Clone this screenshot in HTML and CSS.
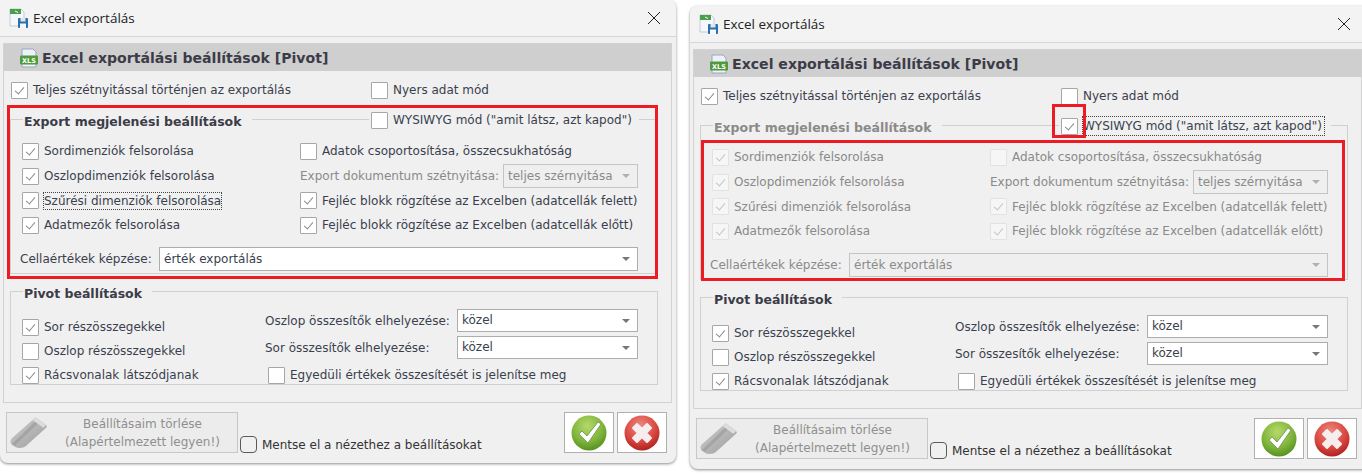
FILE: index.html
```html
<!DOCTYPE html>
<html>
  <head>
    <meta charset="utf-8" />
    <title>Excel exportálás</title>
    <link rel="stylesheet" href="styles.css">
  </head>
  <body>
    <svg class="icon-defs" width="0" height="0">
      <defs>
        <radialGradient id="green-ball" cx="45%" cy="30%" r="75%">
          <stop offset="0" stop-color="#b5da6a" />
          <stop offset="0.6" stop-color="#7fb43a" />
          <stop offset="1" stop-color="#4e8a1c" />
        </radialGradient>
        <radialGradient id="red-ball" cx="45%" cy="30%" r="75%">
          <stop offset="0" stop-color="#ee8a80" />
          <stop offset="0.6" stop-color="#d9473f" />
          <stop offset="1" stop-color="#a81c1c" />
        </radialGradient>
        <linearGradient id="eraser-body" x1="0" y1="0" x2="1" y2="1">
          <stop offset="0" stop-color="#cfcfcf" />
          <stop offset="1" stop-color="#9c9c9c" />
        </linearGradient>
        <symbol id="icon-title" viewBox="0 0 20 20">
          <path d="M1 1h11l3 3v14H1z" fill="#f4f7fb" stroke="#c4ccd6" />
          <rect x="1" y="1" width="11" height="5" fill="#4aa04a" />
          <path d="M6 3l3 1.500" stroke="#fff" fill="none" />
          <rect x="9" y="10" width="10" height="10" rx="1" fill="#2f6fa8" />
          <rect x="11.500" y="10" width="5" height="3.500" fill="#dbe7f2" />
          <rect x="11" y="15.500" width="6" height="4.500" fill="#f4f7fb" />
        </symbol>
        <symbol id="icon-xls" viewBox="0 0 20 20">
          <path d="M3 1h11l3 3v15H3z" fill="#eef1f8" stroke="#9aa6c4" />
          <rect x="1" y="7.500" width="18" height="9" rx="1" fill="#4f9a3c" />
          <text x="10" y="14.800" class="xls-text">XLS</text>
        </symbol>
        <symbol id="icon-eraser" viewBox="0 0 40 34">
          <path d="M27 1l11 8a2 2 0 0 1 0 3L17 31c-3 2.500-8 3-11 1.500L2 30c-2-2-2-5 0-7z" fill="url(#eraser-body)" />
          <path d="M2 29L27 5l3 2L5 31z" fill="#8f8f8f" opacity="0.45" />
          <path d="M27 1l11 8-3 3-11-8z" fill="#dcdcdc" />
        </symbol>
        <symbol id="icon-ok" viewBox="0 0 36 36">
          <circle cx="18" cy="18" r="17.500" fill="url(#green-ball)" />
          <path d="M8 19l3-3 5 5L27 7l3 2-13 19z" fill="#fff" stroke="#6d8f58" stroke-width="0.800" />
        </symbol>
        <symbol id="icon-cancel" viewBox="0 0 36 36">
          <circle cx="18" cy="18" r="17.500" fill="url(#red-ball)" />
          <path d="M13 9l5 5 5-5 4 4-5 5 5 5-4 4-5-5-5 5-4-4 5-5-5-5z" fill="#f6eeee" stroke-linejoin="round" stroke="#f6eeee" stroke-width="2" />
        </symbol>
      </defs>
    </svg>

    <!-- bal ablak -->
    <div class="dialog dialog-left">
      <div class="titlebar">
        <svg class="title-icon"><use href="#icon-title" /></svg>
        <span class="title-text">Excel exportálás</span>
        <svg class="close-icon" viewBox="0 0 12 12"><path d="M0 0l12 12M12 0L0 12" /></svg>
      </div>
      <div class="panel">
        <div class="panel-head">
          <svg class="xls-icon"><use href="#icon-xls" /></svg>
          <span>Excel exportálási beállítások [Pivot]</span>
        </div>
        <div class="top-row">
          <label class="opt"><i class="check on"></i>Teljes szétnyitással történjen az exportálás</label>
          <label class="opt"><i class="check"></i>Nyers adat mód</label>
        </div>
        <div class="group group-export">
          <div class="group-head">
            <span class="legend">Export megjelenési beállítások</span>
            <label class="opt legend-opt"><i class="check"></i>WYSIWYG mód ("amit látsz, azt kapod")</label>
          </div>
          <div class="export-grid">
            <label class="opt"><i class="check on"></i>Sordimenziók felsorolása</label>
            <label class="opt"><i class="check"></i>Adatok csoportosítása, összecsukhatóság</label>
            <label class="opt"><i class="check on"></i>Oszlopdimenziók felsorolása</label>
            <div class="field field-split muted"><span>Export dokumentum szétnyitása:</span><div class="select off">teljes szérnyitása</div></div>
            <label class="opt"><i class="check on"></i><span class="focus">Szűrési dimenziók felsorolása</span></label>
            <label class="opt"><i class="check on"></i>Fejléc blokk rögzítése az Excelben (adatcellák felett)</label>
            <label class="opt"><i class="check on"></i>Adatmezők felsorolása</label>
            <label class="opt"><i class="check on"></i>Fejléc blokk rögzítése az Excelben (adatcellák előtt)</label>
          </div>
          <div class="field field-cell"><span>Cellaértékek képzése:</span><div class="select">érték exportálás</div></div>
        </div>
        <div class="group group-pivot">
          <div class="group-head"><span class="legend">Pivot beállítások</span></div>
          <div class="pivot-grid">
            <div class="pivot-left">
              <label class="opt"><i class="check on"></i>Sor részösszegekkel</label>
              <label class="opt"><i class="check"></i>Oszlop részösszegekkel</label>
              <label class="opt"><i class="check on"></i>Rácsvonalak látszódjanak</label>
            </div>
            <div class="pivot-right">
              <div class="field field-pivot"><span>Oszlop összesítők elhelyezése:</span><div class="select">közel</div></div>
              <div class="field field-pivot"><span>Sor összesítők elhelyezése:</span><div class="select">közel</div></div>
              <label class="opt opt-single"><i class="check"></i>Egyedüli értékek összesítését is jelenítse meg</label>
            </div>
          </div>
        </div>
      </div>
      <div class="footer">
        <button class="btn-reset"><svg class="eraser"><use href="#icon-eraser" /></svg><span>Beállításaim törlése<br />(Alapértelmezett legyen!)</span></button>
        <label class="opt opt-save"><i class="check round"></i>Mentse el a nézethez a beállításokat</label>
        <button class="btn-icon btn-ok"><svg><use href="#icon-ok" /></svg></button>
        <button class="btn-icon"><svg><use href="#icon-cancel" /></svg></button>
      </div>
      <div class="red-frame frame-left"></div>
    </div>

    <!-- jobb ablak, letiltott beállításokkal -->
    <div class="dialog dialog-right">
      <div class="titlebar">
        <svg class="title-icon"><use href="#icon-title" /></svg>
        <span class="title-text">Excel exportálás</span>
        <svg class="close-icon" viewBox="0 0 12 12"><path d="M0 0l12 12M12 0L0 12" /></svg>
      </div>
      <div class="panel">
        <div class="panel-head">
          <svg class="xls-icon"><use href="#icon-xls" /></svg>
          <span>Excel exportálási beállítások [Pivot]</span>
        </div>
        <div class="top-row">
          <label class="opt"><i class="check on"></i>Teljes szétnyitással történjen az exportálás</label>
          <label class="opt"><i class="check"></i>Nyers adat mód</label>
        </div>
        <div class="group group-export is-disabled">
          <div class="group-head">
            <span class="legend">Export megjelenési beállítások</span>
            <label class="opt legend-opt"><i class="check on"></i><span class="focus focus-tight">WYSIWYG mód ("amit látsz, azt kapod")</span></label>
          </div>
          <div class="export-grid">
            <label class="opt"><i class="check on"></i>Sordimenziók felsorolása</label>
            <label class="opt"><i class="check"></i>Adatok csoportosítása, összecsukhatóság</label>
            <label class="opt"><i class="check on"></i>Oszlopdimenziók felsorolása</label>
            <div class="field field-split muted"><span>Export dokumentum szétnyitása:</span><div class="select off">teljes szérnyitása</div></div>
            <label class="opt"><i class="check on"></i>Szűrési dimenziók felsorolása</label>
            <label class="opt"><i class="check on"></i>Fejléc blokk rögzítése az Excelben (adatcellák felett)</label>
            <label class="opt"><i class="check on"></i>Adatmezők felsorolása</label>
            <label class="opt"><i class="check on"></i>Fejléc blokk rögzítése az Excelben (adatcellák előtt)</label>
          </div>
          <div class="field field-cell"><span>Cellaértékek képzése:</span><div class="select off">érték exportálás</div></div>
        </div>
        <div class="group group-pivot">
          <div class="group-head"><span class="legend">Pivot beállítások</span></div>
          <div class="pivot-grid">
            <div class="pivot-left">
              <label class="opt"><i class="check on"></i>Sor részösszegekkel</label>
              <label class="opt"><i class="check"></i>Oszlop részösszegekkel</label>
              <label class="opt"><i class="check on"></i>Rácsvonalak látszódjanak</label>
            </div>
            <div class="pivot-right">
              <div class="field field-pivot"><span>Oszlop összesítők elhelyezése:</span><div class="select">közel</div></div>
              <div class="field field-pivot"><span>Sor összesítők elhelyezése:</span><div class="select">közel</div></div>
              <label class="opt opt-single"><i class="check"></i>Egyedüli értékek összesítését is jelenítse meg</label>
            </div>
          </div>
        </div>
      </div>
      <div class="footer">
        <button class="btn-reset"><svg class="eraser"><use href="#icon-eraser" /></svg><span>Beállításaim törlése<br />(Alapértelmezett legyen!)</span></button>
        <label class="opt opt-save"><i class="check round"></i>Mentse el a nézethez a beállításokat</label>
        <button class="btn-icon btn-ok"><svg><use href="#icon-ok" /></svg></button>
        <button class="btn-icon"><svg><use href="#icon-cancel" /></svg></button>
      </div>
      <div class="red-frame frame-right"></div>
      <div class="red-frame frame-check"></div>
    </div>
  </body>
</html>
```

FILE: styles.css
```css
* {
  margin: 0;
  padding: 0;
  box-sizing: border-box;
}

html,
body {
  height: 474px;
  overflow: hidden;
  background-color: #fff;
}

body {
  position: relative;
  font-family: "DejaVu Sans", "Liberation Sans", sans-serif;
  font-size: 12px;
  color: #3a3f4d;
}

.icon-defs {
  position: absolute;
}

.xls-text {
  font-family: "DejaVu Sans", sans-serif;
  font-size: 6.500px;
  font-weight: bold;
  fill: #fff;
  text-anchor: middle;
}

/* ablakok */
.dialog {
  position: absolute;
  width: 676px;
  height: 463px;
  background-color: #f0f0f0;
  border-radius: 0 8px 8px 8px;
  box-shadow: 0 1px 3px rgba(0, 0, 0, 0.45);
  overflow: hidden;
}

.dialog-left {
  left: 0;
  top: 0;
}

.dialog-right {
  left: 690px;
  top: 6px;
  border-radius: 8px 0 0 8px;
}

.titlebar {
  display: flex;
  align-items: center;
  height: 37px;
  padding: 0 16px 0 9px;
  background-color: #f3f3f3;
  border-bottom: 1px solid #d6d6d6;
}

.title-icon {
  width: 20px;
  height: 20px;
  margin-right: 4px;
}

.title-text {
  flex: 1;
  font-family: "Open Sans", sans-serif;
  font-size: 13.500px;
  color: #222;
}

.close-icon {
  width: 12px;
  height: 12px;
  fill: none;
  stroke: #222;
  stroke-width: 1;
}

/* fő panel */
.panel {
  height: 360px;
  margin: 6px 4px 0 3px;
  border: 1px solid #d2d2d2;
}

.panel-head {
  display: flex;
  align-items: center;
  height: 27px;
  padding-left: 15px;
  background-color: #cfcfcf;
  font-size: 14.100px;
  font-weight: bold;
  color: #3c3c48;
}

.xls-icon {
  width: 20px;
  height: 20px;
  margin-right: 3px;
}

.top-row {
  display: grid;
  grid-template-columns: 360px 1fr;
  align-items: center;
  height: 24px;
  margin-top: 7px;
  padding-left: 7px;
}

.opt {
  display: flex;
  align-items: center;
  gap: 5px;
  white-space: nowrap;
}

.check {
  position: relative;
  flex: none;
  width: 17px;
  height: 17px;
  background-color: #fff;
  border: 1.500px solid #a6a6a6;
  border-radius: 1px;
}

.check.on::after {
  content: "";
  position: absolute;
  left: 5px;
  top: 2px;
  width: 4px;
  height: 8px;
  border: solid #8c8c8c;
  border-width: 0 1.500px 1.500px 0;
  transform: rotate(40deg);
}

.check.round {
  background-color: transparent;
  border-color: #5a5a5a;
  border-radius: 4px;
}

.focus {
  padding: 1px 0;
  outline: 1px dotted #444;
}

.focus-tight {
  padding: 2px 2px 2px 0;
}

/* csoportok */
.group {
  width: 648px;
  margin-left: 6px;
  border: 1px solid #d0d0d0;
  padding: 0 19px 0 11px;
}

.group-export {
  height: 155px;
  margin-top: 17px;
}

.group-pivot {
  height: 94px;
  margin-top: 17px;
}

.group-head {
  display: grid;
  grid-template-columns: 347px auto;
  justify-content: start;
  align-items: center;
  height: 18px;
  margin-top: -9px;
}

.legend {
  justify-self: start;
  margin-left: 1px;
  padding: 3px 10px 0 1px;
  background-color: #f0f0f0;
  font-size: 12.500px;
  font-weight: bold;
  color: #3c3c48;
}

.legend-opt {
  height: 18px;
  padding: 0 7px 0 2px;
  background-color: #f0f0f0;
}

.export-grid {
  display: grid;
  grid-template-columns: 278px 1fr;
  grid-auto-rows: 24.700px;
  align-items: center;
  margin-top: 10px;
}

.field {
  display: flex;
  align-items: center;
  white-space: nowrap;
}

.select {
  position: relative;
  height: 24px;
  line-height: 22px;
  padding-left: 4px;
  background-color: #fff;
  border: 1.500px solid #adadad;
}

.select::after {
  content: "";
  position: absolute;
  right: 7px;
  top: 9px;
  border: 4px solid transparent;
  border-top-color: #777;
}

.select.off {
  background-color: #efefef;
  color: #8a8a8a;
  border-color: #c4c4c4;
}

.select.off::after {
  border-top-color: #b0b0b0;
}

.field-split {
  justify-content: space-between;
}

.field-split .select {
  width: 135px;
}

.field-cell {
  justify-content: space-between;
  margin: 9px 0 0 -2px;
}

.field-cell .select {
  width: 479px;
}

.pivot-grid {
  display: grid;
  grid-template-columns: 243px 1fr;
  margin-top: 14px;
}

.pivot-left .opt {
  height: 24px;
}

.pivot-right {
  margin-top: -6px;
}

.field-pivot {
  justify-content: space-between;
  margin-bottom: 4px;
}

.field-pivot .select {
  width: 181px;
  height: 23px;
  line-height: 21px;
}

.opt-single {
  height: 24px;
  margin-left: 3px;
}

/* letiltott rész */
.is-disabled .export-grid,
.is-disabled .field-cell span,
.muted span {
  color: #8a8a8a;
}

.is-disabled .export-grid .check {
  background-color: #f6f6f6;
  border-color: #e2e2e2;
}

.is-disabled .export-grid .check.on::after {
  border-color: #c4c4c4;
}

.is-disabled .legend {
  color: #8a8a8a;
}

/* lábléc */
.footer {
  display: flex;
  align-items: flex-start;
  padding: 9px 9px 0 6px;
}

.btn-reset {
  display: flex;
  align-items: center;
  width: 232px;
  height: 41px;
  padding-left: 3px;
  background-color: #ececec;
  border: 1px solid #c8c8c8;
  font-family: inherit;
  font-size: 12px;
  line-height: 18px;
  color: #8f8f8f;
}

.eraser {
  width: 38px;
  height: 33px;
  flex: none;
}

.btn-reset span {
  flex: 1;
  text-align: center;
}

.opt-save {
  margin: 24px 0 0 2px;
  color: #333;
}

.btn-icon {
  display: flex;
  align-items: center;
  justify-content: center;
  width: 50px;
  height: 41px;
  margin-left: 3px;
  background-color: #fff;
  border: 1px solid #b0b0b0;
}

.btn-ok {
  margin-left: auto;
}

.btn-icon svg {
  width: 36px;
  height: 36px;
}

/* piros jelölések */
.red-frame {
  position: absolute;
  border: 3px solid #ed1c24;
}

.frame-left {
  left: 7px;
  top: 105px;
  width: 651px;
  height: 174px;
}

.frame-right {
  left: 11px;
  top: 134px;
  width: 644px;
  height: 141px;
}

.frame-check {
  left: 362px;
  top: 98px;
  width: 34px;
  height: 34px;
}
```
